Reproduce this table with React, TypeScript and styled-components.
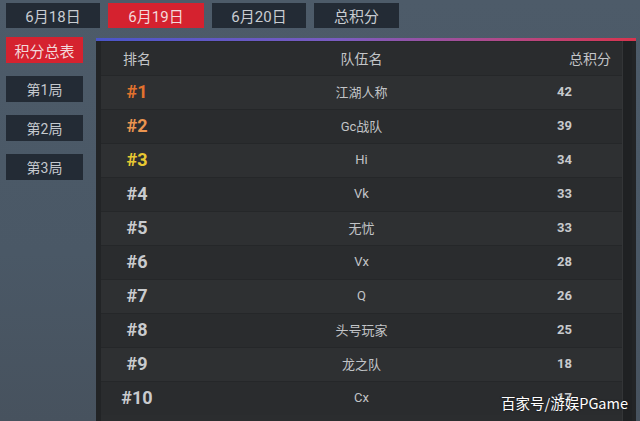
import React from "react";
import styled, { createGlobalStyle } from "styled-components";

const Global = createGlobalStyle`
  html, body { margin: 0; padding: 0; }
  body {
    width: 640px; height: 421px; overflow: hidden;
    background: #4b5967;
    font-family: Roboto, "Noto Sans CJK SC", "Noto Sans", sans-serif;
  }
`;

const Page = styled.div`
  width: 640px;
  height: 421px;
  box-sizing: border-box;
  padding: 3px 0 0 6px;
  display: flex;
  flex-direction: column;
  gap: 9px;
  background: linear-gradient(180deg, #4d5b69 0%, #4a5866 60%, #47525e 100%);
  position: relative;
  overflow: hidden;
`;

const TabRow = styled.div`
  display: flex;
  gap: 8px;
`;

const Tab = styled.div<{ $w: number; $active?: boolean }>`
  width: ${(p) => p.$w}px;
  height: 25px;
  display: flex;
  align-items: center;
  justify-content: center;
  background: ${(p) => (p.$active ? "#d5222f" : "#232b35")};
  color: ${(p) => (p.$active ? "#f3d9db" : "#c9cdd2")};
  font-size: 15px;
`;

const Body = styled.div`
  display: flex;
  gap: 13px;
  flex: 1;
  min-height: 0;
`;

const Sidebar = styled.div`
  width: 77px;
  display: flex;
  flex-direction: column;
  gap: 13px;
`;

const SideBtn = styled.div<{ $active?: boolean }>`
  height: 26px;
  display: flex;
  align-items: center;
  justify-content: center;
  background: ${(p) => (p.$active ? "#d5222f" : "#232b35")};
  color: ${(p) => (p.$active ? "#f3d9db" : "#c4c8cd")};
  font-size: ${(p) => (p.$active ? "15px" : "14px")};
`;

const Panel = styled.div`
  width: 540px;
  display: flex;
  flex-direction: column;
  margin-top: 1px;
`;

const GradientBar = styled.div`
  height: 3px;
  background: linear-gradient(90deg, #4a55c8 0%, #7a5cc0 45%, #b04a8a 75%, #d8344e 100%);
`;

const Frame = styled.div`
  flex: 1;
  display: flex;
  background: #222426;
`;

const Table = styled.div`
  flex: 1;
  margin-left: 5px;
  background: #2b2d2f;
  display: flex;
  flex-direction: column;
`;

const ScrollStrip = styled.div`
  width: 9px;
  background: #1f2123;
  border-left: 1px solid #333537;
  margin-right: 4px;
`;

const Row = styled.div<{ $alt?: boolean }>`
  height: 34px;
  flex: none;
  display: grid;
  grid-template-columns: 72px 1fr 72px;
  align-items: center;
  padding-bottom: 2px;
  background: ${(p) => (p.$alt ? "#2e3032" : "#2a2c2e")};
  border-top: 1px solid #252729;
  box-sizing: border-box;
`;

const HeadCell = styled.div<{ $align: "center" | "right" }>`
  color: #c3c5c8;
  font-size: 14px;
  text-align: ${(p) => p.$align};
  padding-right: ${(p) => (p.$align === "right" ? "11px" : "0")};
`;

const Rank = styled.div<{ $color: string }>`
  color: ${(p) => p.$color};
  font-weight: 700;
  font-size: 18px;
  text-align: center;
`;

const Team = styled.div`
  color: #c2c4c7;
  font-size: 13px;
  text-align: center;
`;

const Score = styled.div`
  color: #c8cacd;
  font-weight: 700;
  font-size: 13px;
  text-align: right;
  padding-right: 50px;
`;

const Watermark = styled.div`
  position: absolute;
  right: 12px;
  bottom: 8px;
  color: #ffffff;
  font-size: 14.5px;
  font-family: "Noto Sans CJK SC", "Noto Sans", sans-serif;
  text-shadow: 0 0 2px rgba(0, 0, 0, 0.6);
`;

const rows = [
  { r: "#1", t: "江湖人称", s: 42, c: "#e2722e" },
  { r: "#2", t: "Gc战队", s: 39, c: "#eb9550" },
  { r: "#3", t: "Hi", s: 34, c: "#e8c932" },
  { r: "#4", t: "Vk", s: 33, c: "#c9cbce" },
  { r: "#5", t: "无忧", s: 33, c: "#c9cbce" },
  { r: "#6", t: "Vx", s: 28, c: "#c9cbce" },
  { r: "#7", t: "Q", s: 26, c: "#c9cbce" },
  { r: "#8", t: "头号玩家", s: 25, c: "#c9cbce" },
  { r: "#9", t: "龙之队", s: 18, c: "#c9cbce" },
  { r: "#10", t: "Cx", s: 17, c: "#c9cbce" },
];

export default function App() {
  return (
    <>
      <Global />
      <Page>
        <TabRow>
          <Tab $w={94}>6月18日</Tab>
          <Tab $w={96} $active>6月19日</Tab>
          <Tab $w={94}>6月20日</Tab>
          <Tab $w={85}>总积分</Tab>
        </TabRow>
        <Body>
          <Sidebar>
            <SideBtn $active>积分总表</SideBtn>
            <SideBtn>第1局</SideBtn>
            <SideBtn>第2局</SideBtn>
            <SideBtn>第3局</SideBtn>
          </Sidebar>
          <Panel>
            <GradientBar />
            <Frame>
              <Table>
                <Row>
                  <HeadCell $align="center">排名</HeadCell>
                  <HeadCell $align="center">队伍名</HeadCell>
                  <HeadCell $align="right">总积分</HeadCell>
                </Row>
                {rows.map((row, i) => (
                  <Row key={row.r} $alt={i % 2 === 0}>
                    <Rank $color={row.c}>{row.r}</Rank>
                    <Team>{row.t}</Team>
                    <Score>{row.s}</Score>
                  </Row>
                ))}
              </Table>
              <ScrollStrip />
            </Frame>
          </Panel>
        </Body>
        <Watermark>百家号/游娱PGame</Watermark>
      </Page>
    </>
  );
}
